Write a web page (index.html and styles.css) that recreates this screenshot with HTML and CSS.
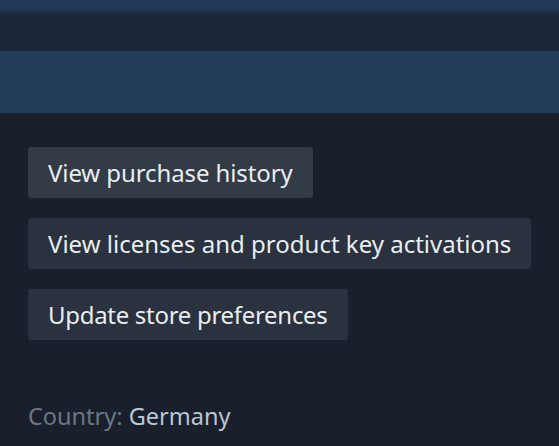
FILE: index.html
```html
<!DOCTYPE html>
<html>
<head>
<meta charset="utf-8">
<link rel="stylesheet" href="styles.css">
</head>
<body>
<div class="top-band"></div>
<div class="shade"></div>
<div class="blue-band"></div>
<main class="content">
  <div class="actions">
    <a class="btn btn-hover">View purchase history</a>
    <a class="btn">View licenses and product key activations</a>
    <a class="btn btn-narrow">Update store preferences</a>
  </div>
  <p class="country"><span class="label">Country:</span> <span class="value">Germany</span></p>
</main>
</body>
</html>
```
FILE: styles.css
```css
html, body {
  margin: 0;
  padding: 0;
  background: #19202b;
  font-family: "Noto Sans", "Open Sans", sans-serif;
  overflow: hidden;
}
.top-band {
  height: 10px;
  background: #223a57;
}
.shade {
  height: 41px;
  background: linear-gradient(#1f3450 0px, #1b2739 6px, #1b2639 100%);
}
.blue-band {
  height: 62px;
  background: #233c5a;
}
.content {
  padding: 34px 28px 0;
}
.actions {
  display: flex;
  flex-direction: column;
  align-items: flex-start;
  gap: 20px;
}
.btn {
  display: block;
  background: #29323e;
  color: #e8edf2;
  font-size: 24px;
  line-height: 51px;
  height: 51px;
  padding: 0 20px;
  border-radius: 3px;
  white-space: nowrap;
}
.btn-hover {
  background: #333b47;
  letter-spacing: -0.1px;
}
.btn-narrow {
  letter-spacing: -0.3px;
}
.country {
  margin: 61px 0 0;
  font-size: 23.5px;
  line-height: 30px;
}
.label { color: #6b7785; }
.value { color: #b9c6d3; }
```
